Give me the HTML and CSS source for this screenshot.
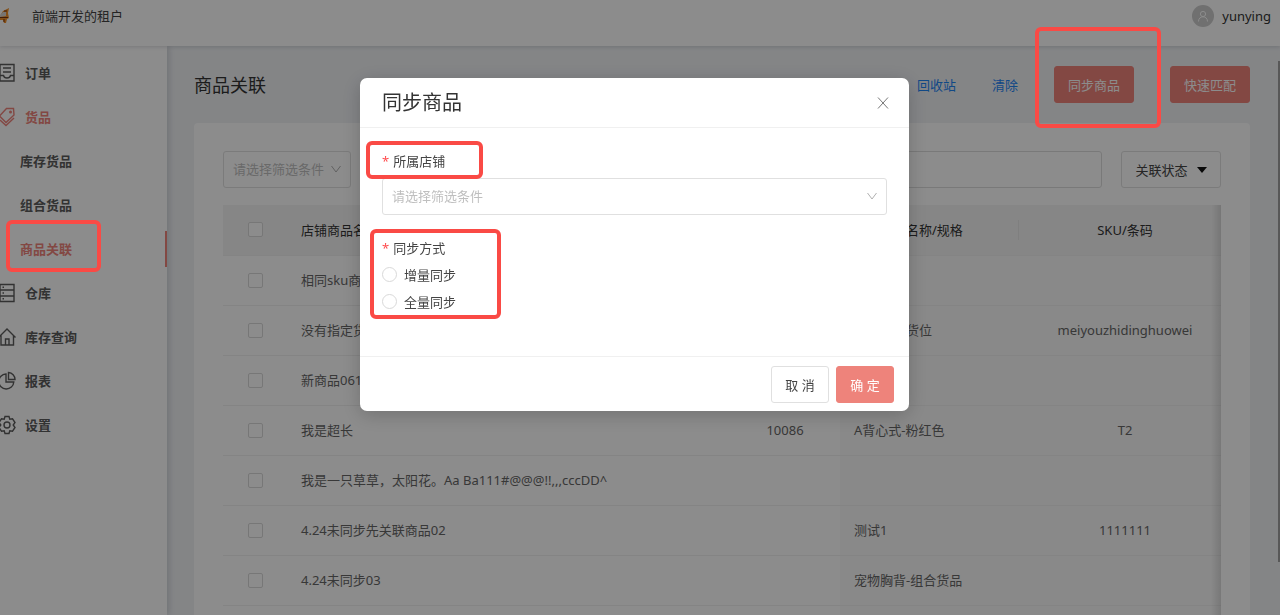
FILE: index.html
```html
<!DOCTYPE html>
<html lang="zh-CN">
<head>
    <meta charset="UTF-8">
    <meta name="viewport" content="width=device-width, initial-scale=1.0">
    <title>商品关联</title>
    <link rel="stylesheet" href="styles.css">
</head>
<body>
    <!-- 顶部栏 -->
    <header class="header">
        <svg class="logo" width="10" height="16" viewBox="0 0 10 16">
            <path d="M9 0 L8 5 L9 10 L7 11 L6 15 L4 15 L3 12 L0 12 L0 8 L3 3 Z" fill="#f0902a"/>
            <path d="M0 7 L3 4 L6 4 L6 8 L0 9 Z" fill="#d9d4d0"/>
            <path d="M0 9.500 H8 M4 3 L7 3 M4 11 V14" stroke="#7a3510" fill="none"/>
        </svg>
        <span class="tenant">前端开发的租户</span>
        <div class="user">
            <span class="avatar">
                <svg width="12" height="12" viewBox="0 0 12 12" fill="none" stroke="#fff">
                    <circle cx="6" cy="4" r="2.600"/>
                    <path d="M1.500 11.500 C1.500 8.500 3.500 6.800 6 6.800 S10.500 8.500 10.500 11.500"/>
                </svg>
            </span>
            <span>yunying</span>
        </div>
    </header>

    <div class="layout">
        <!-- 侧边菜单 -->
        <nav class="sidebar">
            <a class="menu-item" href="#">
                <svg class="icon" viewBox="0 0 18 20"><path d="M2 1.500 H16 V18 H2 Z M5 5 H13 M5 9 H13 M2 12.500 H5.500 Q6 15 9 15 T12.500 12.500 H16"/></svg>
                <span>订单</span>
            </a>
            <a class="menu-item active" href="#">
                <svg class="icon" viewBox="0 0 18 20"><path d="M8.500 1.500 L15.500 1.500 L16 8 L8 15.500 L1.500 9 Z M2 13 L8 18.500 L16 11"/><circle cx="12.500" cy="5" r="0.800"/></svg>
                <span>货品</span>
            </a>
            <a class="menu-item sub" href="#">库存货品</a>
            <a class="menu-item sub" href="#">组合货品</a>
            <a class="menu-item sub active selected" href="#">商品关联<i class="mark mark-menu"></i></a>
            <a class="menu-item" href="#">
                <svg class="icon" viewBox="0 0 18 20"><path d="M2 1.500 H16 V18.500 H2 Z M2 7 H16 M2 13 H16 M4.500 4.300 H6 M4.500 10 H6 M4.500 15.800 H6"/></svg>
                <span>仓库</span>
            </a>
            <a class="menu-item" href="#">
                <svg class="icon" viewBox="0 0 18 20"><path d="M0.500 10.500 L9 2 L17.500 10.500 M3 8.500 V18 H15.500 V8.500 M7.500 18 V12 H11 V18"/></svg>
                <span>库存查询</span>
            </a>
            <a class="menu-item" href="#">
                <svg class="icon" viewBox="0 0 18 20"><path d="M8 3 A7.500 7.500 0 1 0 15.800 11 H8 Z M10.500 1.500 A7 7 0 0 1 17 8.500 H10.500 Z"/></svg>
                <span>报表</span>
            </a>
            <a class="menu-item" href="#">
                <svg class="icon" viewBox="0 0 18 20"><path d="M7 1.500 H11 L11.800 4.200 L14.500 3.800 L17 7.500 L15.200 10 L17 12.500 L14.500 16.200 L11.800 15.800 L11 18.500 H7 L6.200 15.800 L3.500 16.200 L1 12.500 L2.800 10 L1 7.500 L3.500 3.800 L6.200 4.200 Z"/><circle cx="9" cy="10" r="3"/></svg>
                <span>设置</span>
            </a>
        </nav>

        <!-- 主内容 -->
        <main class="main">
            <div class="page-head">
                <h1>商品关联</h1>
                <a class="link" href="#">回收站</a>
                <a class="link" href="#">清除</a>
                <div class="marked">
                    <button class="btn btn-primary btn-wide">同步商品</button>
                    <i class="mark mark-sync"></i>
                </div>
                <button class="btn btn-primary btn-wide">快速匹配</button>
            </div>

            <div class="card">
                <div class="filters">
                    <div class="select filter-select">
                        <select aria-label="筛选条件">
                            <option>请选择筛选条件</option>
                        </select>
                        <svg class="arrow" viewBox="0 0 10 8"><path d="M0.500 1 L5 7 L9.500 1"/></svg>
                    </div>
                    <input class="search" type="text" aria-label="搜索">
                    <button class="btn btn-status">关联状态
                        <svg width="10" height="6" viewBox="0 0 10 6"><path d="M0 0 H10 L5 6 Z" fill="#111"/></svg>
                    </button>
                </div>

                <div class="table-wrap">
                    <table>
                        <thead>
                            <tr>
                                <th class="col-check"><input type="checkbox" aria-label="全选"></th>
                                <th class="col-name">店铺商品名称</th>
                                <th class="col-code"></th>
                                <th class="col-goods">系统货品名称/规格</th>
                                <th class="col-sku">SKU/条码</th>
                            </tr>
                        </thead>
                        <tbody>
                            <tr>
                                <td><input type="checkbox" aria-label="选择"></td>
                                <td>相同sku商品</td>
                                <td></td>
                                <td></td>
                                <td></td>
                            </tr>
                            <tr>
                                <td><input type="checkbox" aria-label="选择"></td>
                                <td>没有指定货位</td>
                                <td></td>
                                <td>没有指定货位</td>
                                <td>meiyouzhidinghuowei</td>
                            </tr>
                            <tr>
                                <td><input type="checkbox" aria-label="选择"></td>
                                <td>新商品061</td>
                                <td></td>
                                <td></td>
                                <td></td>
                            </tr>
                            <tr>
                                <td><input type="checkbox" aria-label="选择"></td>
                                <td>我是超长</td>
                                <td>10086</td>
                                <td>A背心式-粉红色</td>
                                <td>T2</td>
                            </tr>
                            <tr>
                                <td><input type="checkbox" aria-label="选择"></td>
                                <td>我是一只草草，太阳花。Aa Ba111#@@@!!,,,cccDD^</td>
                                <td></td>
                                <td></td>
                                <td></td>
                            </tr>
                            <tr>
                                <td><input type="checkbox" aria-label="选择"></td>
                                <td>4.24未同步先关联商品02</td>
                                <td></td>
                                <td>测试1</td>
                                <td>1111111</td>
                            </tr>
                            <tr>
                                <td><input type="checkbox" aria-label="选择"></td>
                                <td>4.24未同步03</td>
                                <td></td>
                                <td>宠物胸背-组合货品</td>
                                <td></td>
                            </tr>
                            <tr>
                                <td></td>
                                <td></td>
                                <td></td>
                                <td></td>
                                <td></td>
                            </tr>
                        </tbody>
                    </table>
                </div>
            </div>
            <div class="scroll-thumb"></div>
        </main>
    </div>

    <!-- 同步商品弹窗 -->
    <div class="overlay">
        <form class="modal" role="dialog" aria-labelledby="modalTitle">
            <div class="modal-head">
                <h2 id="modalTitle">同步商品</h2>
                <button class="close" type="button" aria-label="关闭">
                    <svg width="12" height="12" viewBox="0 0 12 12"><path d="M1 0.500 L11 11.500 M11 0.500 L1 11.500"/></svg>
                </button>
            </div>
            <div class="modal-body">
                <div class="form-group">
                    <label class="title" for="shop"><b>*</b>所属店铺</label>
                    <div class="select">
                        <select id="shop">
                            <option>请选择筛选条件</option>
                        </select>
                        <svg class="arrow" viewBox="0 0 10 8"><path d="M0.500 1 L5 7 L9.500 1"/></svg>
                    </div>
                    <i class="mark mark-shop"></i>
                </div>
                <div class="form-group" role="radiogroup" aria-labelledby="modeTitle">
                    <div id="modeTitle"><b>*</b>同步方式</div>
                    <label class="radio"><input type="radio" name="mode">增量同步</label>
                    <label class="radio"><input type="radio" name="mode">全量同步</label>
                    <i class="mark mark-mode"></i>
                </div>
            </div>
            <div class="modal-foot">
                <button class="btn" type="button">取 消</button>
                <button class="btn btn-primary" type="button">确 定</button>
            </div>
        </form>
    </div>
</body>
</html>
```
FILE: styles.css
```css
* {
    box-sizing: border-box;
}
body {
    margin: 0;
    height: 100vh;
    overflow: hidden;
    display: flex;
    flex-direction: column;
    font-family: "Noto Sans", "Noto Sans CJK SC", sans-serif;
    font-size: 13px;
    line-height: 22px;
    color: #666;
    background-color: #f0f2f5;
}
a {
    text-decoration: none;
}
button, input, select {
    font: inherit;
    color: inherit;
}
/* 顶部栏 */
.header {
    position: relative;
    z-index: 1;
    flex: none;
    display: flex;
    align-items: center;
    height: 46px;
    padding: 0 9px 14px 0;
    background-color: #fff;
    box-shadow: 0 1px 4px rgba(0, 21, 41, 0.15);
}
.tenant {
    margin-left: 22px;
    color: #444;
}
.user {
    display: flex;
    align-items: center;
    gap: 8px;
    margin-left: auto;
    color: #333;
}
.avatar {
    display: flex;
    align-items: center;
    justify-content: center;
    width: 22px;
    height: 22px;
    border-radius: 50%;
    background-color: #ccc;
}
.layout {
    flex: 1;
    display: flex;
    min-height: 0;
}
/* 侧边菜单 */
.sidebar {
    position: relative;
    flex: none;
    width: 167px;
    padding-top: 5px;
    background-color: #fff;
    box-shadow: 2px 0 6px rgba(0, 21, 41, 0.15);
}
.menu-item {
    position: relative;
    display: flex;
    align-items: center;
    gap: 9px;
    height: 44px;
    color: #5c5c5c;
    font-weight: bold;
}
.menu-item.sub {
    padding-left: 20px;
}
.menu-item.active {
    color: #ee837b;
}
.menu-item.selected::after {
    content: "";
    position: absolute;
    right: 0;
    top: 4px;
    width: 2px;
    height: 36px;
    background-color: #ee837b;
}
.icon {
    width: 18px;
    height: 20px;
    margin-left: -2px;
    fill: none;
    stroke: currentColor;
    stroke-width: 1.4;
}
/* 主内容 */
.main {
    position: relative;
    flex: 1;
    min-width: 0;
    padding: 20px 30px 0 27px;
}
.page-head {
    display: flex;
    align-items: center;
    gap: 36px;
    margin-bottom: 20px;
}
h1 {
    flex: 1;
    margin: 0;
    font-size: 18px;
    font-weight: normal;
    color: #333;
}
.link {
    color: #1f85f5;
}
.btn {
    height: 37px;
    padding: 0 13px;
    border: 1px solid #e0e0e0;
    border-radius: 3px;
    background-color: #fff;
    color: #444;
}
.btn-primary {
    border-color: #ee837b;
    background-color: #ee837b;
    color: #fff;
}
.btn-wide {
    width: 80px;
}
.marked {
    position: relative;
}
.card {
    padding: 28px 29px;
    border-radius: 4px;
    background-color: #fff;
}
.filters {
    display: flex;
    gap: 19px;
    margin-bottom: 17px;
}
.select {
    position: relative;
}
.select select {
    appearance: none;
    display: block;
    width: 100%;
    height: 37px;
    padding: 0 9px 1px;
    border: 1px solid #e0e0e0;
    border-radius: 3px;
    background-color: #fff;
    color: #bfbfbf;
}
.filter-select {
    width: 128px;
}
.arrow {
    position: absolute;
    right: 10px;
    top: 14px;
    width: 10px;
    height: 8px;
    fill: none;
    stroke: #b0b0b0;
}
.search {
    flex: 1;
    height: 37px;
    border: 1px solid #ddd;
    border-radius: 3px;
}
.btn-status {
    display: flex;
    align-items: center;
    justify-content: center;
    gap: 9px;
    width: 100px;
}
/* 商品表格，最右一列超出可视区域 */
.table-wrap {
    position: relative;
    overflow: hidden;
}
.table-wrap::after {
    content: "";
    position: absolute;
    top: 0;
    right: 0;
    bottom: 0;
    width: 10px;
    background: linear-gradient(to left, rgba(0, 0, 0, 0.12), rgba(0, 0, 0, 0));
}
table {
    width: calc(100% + 11px);
    table-layout: fixed;
    border-collapse: collapse;
}
th, td {
    height: 50px;
    padding: 0 14px;
    border-bottom: 1px solid #f0f0f0;
    text-align: left;
    font-weight: normal;
    white-space: nowrap;
}
th {
    background-color: #f5f5f5;
    color: #333;
}
.col-check {
    width: 64px;
}
.col-code {
    width: 110px;
}
.col-goods {
    width: 178px;
}
.col-sku {
    width: 214px;
    background: linear-gradient(#e8e8e8, #e8e8e8) 0 50% / 1px 20px no-repeat #f5f5f5;
}
th:first-child, td:first-child,
th:nth-child(3), td:nth-child(3),
th:last-child, td:last-child {
    text-align: center;
}
td:nth-child(n+4) {
    background-color: #f9f9f9;
}
input[type="checkbox"], input[type="radio"] {
    appearance: none;
    display: block;
    width: 15px;
    height: 15px;
    margin: 0 auto;
    border: 1px solid #d9d9d9;
    border-radius: 2px;
    background-color: #fff;
}
.scroll-thumb {
    position: absolute;
    right: 0;
    top: 15px;
    width: 2px;
    height: 88%;
    background-color: #a0a0a0;
}
/* 弹窗 */
.overlay {
    position: fixed;
    inset: 0;
    z-index: 10;
    display: flex;
    align-items: flex-start;
    justify-content: center;
    padding: 78px 11px 0 0;
    background-color: rgba(0, 0, 0, 0.45);
}
.modal {
    width: 549px;
    border-radius: 7px;
    background-color: #fff;
    box-shadow: 0 4px 20px rgba(0, 0, 0, 0.2);
}
.modal-head {
    display: flex;
    align-items: center;
    justify-content: space-between;
    height: 50px;
    padding: 0 20px 0 22px;
    border-bottom: 1px solid #f0f0f0;
}
h2 {
    margin: 0;
    font-size: 20px;
    font-weight: normal;
    color: #333;
}
.close {
    display: flex;
    padding: 0;
    border: none;
    background: none;
}
.close svg {
    stroke: #777;
}
.modal-body {
    min-height: 228px;
    padding: 22px 22px 0;
}
.form-group {
    position: relative;
    margin-bottom: 22px;
    color: #444;
}
.title {
    display: block;
    margin-bottom: 6px;
}
.form-group b {
    margin-right: 4px;
    font-weight: normal;
    color: #ff4d4f;
}
.radio {
    display: flex;
    align-items: center;
    gap: 7px;
    height: 27px;
}
.radio input[type="radio"] {
    margin: 0;
    border-radius: 50%;
}
#modeTitle {
    margin-bottom: 2px;
}
.modal-foot {
    display: flex;
    justify-content: flex-end;
    gap: 7px;
    padding: 9px 15px 8px;
    border-top: 1px solid #f0f0f0;
}
.modal-foot .btn {
    width: 58px;
}
/* 红色标注框 */
.mark {
    position: absolute;
    z-index: 20;
    border: 4px solid #fa4a45;
    border-radius: 6px;
    pointer-events: none;
}
.mark-menu {
    left: 6px;
    top: -7px;
    width: 95px;
    height: 52px;
}
.mark-sync {
    left: -19px;
    top: -39px;
    width: 126px;
    height: 101px;
}
.mark-shop {
    left: -16px;
    top: -9px;
    width: 117px;
    height: 38px;
}
.mark-mode {
    left: -12px;
    top: -8px;
    width: 131px;
    height: 90px;
}
```
